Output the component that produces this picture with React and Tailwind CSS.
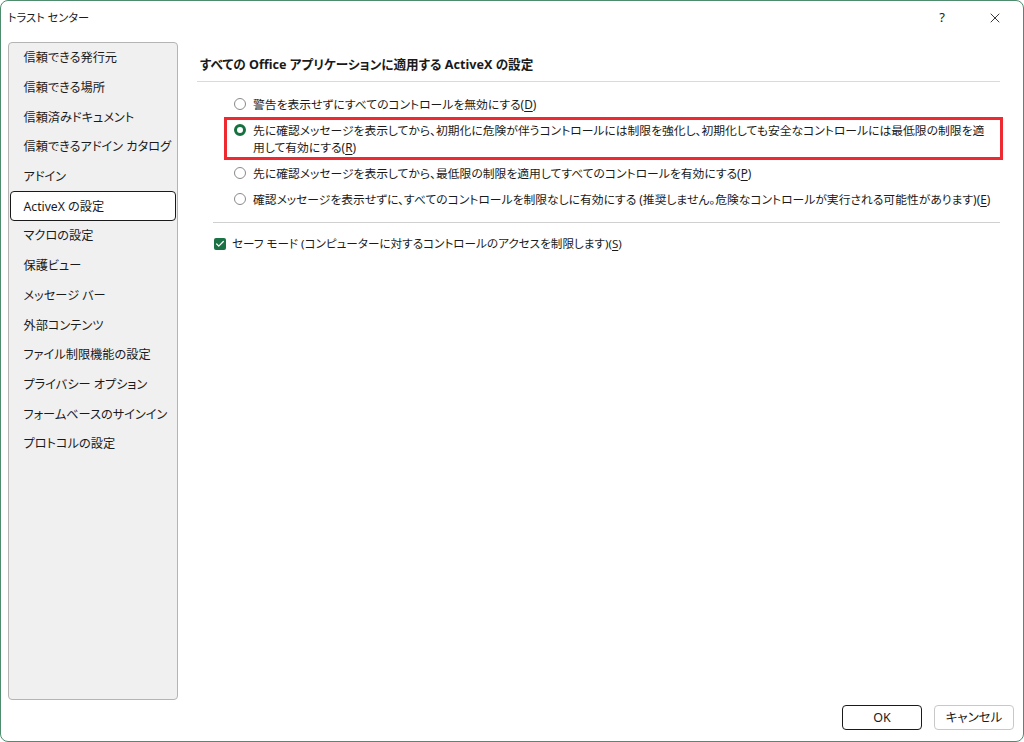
import { Check, X } from "lucide-react";

const navItems = [
  "信頼できる発行元",
  "信頼できる場所",
  "信頼済みドキュメント",
  "信頼できるアドイン カタログ",
  "アドイン",
  "ActiveX の設定",
  "マクロの設定",
  "保護ビュー",
  "メッセージ バー",
  "外部コンテンツ",
  "ファイル制限機能の設定",
  "プライバシー オプション",
  "フォームベースのサインイン",
  "プロトコルの設定",
];

const options = [
  { text: "警告を表示せずにすべてのコントロールを無効にする", key: "D" },
  {
    text: "先に確認メッセージを表示してから、初期化に危険が伴うコントロールには制限を強化し、初期化しても安全なコントロールには最低限の制限を適用して有効にする",
    key: "R",
    selected: true,
  },
  { text: "先に確認メッセージを表示してから、最低限の制限を適用してすべてのコントロールを有効にする", key: "P" },
  {
    text: "確認メッセージを表示せずに、すべてのコントロールを制限なしに有効にする (推奨しません。危険なコントロールが実行される可能性があります)",
    key: "E",
  },
];

function Radio({ selected }) {
  if (selected) {
    return (
      <span className="mt-[2.5px] box-border h-[12px] w-[12px] shrink-0 rounded-full border-[3.5px] border-[#17703f] bg-white" />
    );
  }
  return (
    <span className="mt-[2.5px] box-border h-[12px] w-[12px] shrink-0 rounded-full border border-[#8a8a8a] bg-white" />
  );
}

export default function App() {
  return (
    <div
      className="flex h-[742px] w-[1024px] flex-col overflow-hidden rounded-[8px] border border-[#4f8c6e] bg-white text-[12.2px] leading-[17px] text-[#1a1a1a] [font-feature-settings:'palt']"
      style={{ fontFamily: '"Noto Sans", "Noto Sans CJK JP", sans-serif' }}
    >
      {/* title bar */}
      <div className="flex h-[41px] shrink-0 items-start justify-between pt-[8px]">
        <div className="pl-[7px] text-[11.2px]">トラスト センター</div>
        <div className="flex items-center">
          <span className="mr-[42px] text-[13px]">?</span>
          <X className="mr-[20px] mt-[1px] h-[16px] w-[16px]" strokeWidth={1.3} />
        </div>
      </div>

      {/* body */}
      <div className="flex min-h-0 flex-1 px-[7px]">
        <div className="flex h-[658px] w-[170px] shrink-0 flex-col rounded-[4px] border border-[#b4b4b4] bg-[#f0f0f0]">
          {navItems.map((item) => (
            <div
              key={item}
              className={
                item === "ActiveX の設定"
                  ? "mx-[1px] flex h-[29.7px] shrink-0 items-center whitespace-nowrap rounded-[4px] border-[1.5px] border-[#1a1a1a] bg-white pl-[12.5px]"
                  : "flex h-[29.7px] shrink-0 items-center whitespace-nowrap pl-[14.5px]"
              }
            >
              {item}
            </div>
          ))}
        </div>

        <div className="ml-[19px] flex-1 pr-[16px] pt-[14px]">
          <div className="border-b border-[#dadada] pb-[8px] pl-[3px] text-[12.6px] font-bold">
            すべての Office アプリケーションに適用する ActiveX の設定
          </div>

          <div className="-mr-[6px] pl-[27px] pt-[9px] text-[11.8px]">
            {options.map((o) => (
              <div
                key={o.key}
                className={
                  o.selected
                    ? "mr-[3px] flex gap-[7px] py-[4.5px] pl-[10px] pr-[12px] ring-[3px] ring-inset ring-[#ee2a30]"
                    : "flex gap-[7px] py-[4.5px] pl-[10px] pr-[2px]"
                }
              >
                <Radio selected={o.selected} />
                <span>
                  {o.text}(<span className="underline underline-offset-2">{o.key}</span>)
                </span>
              </div>
            ))}
          </div>

          <div className="ml-[16px] mt-[10px] border-t border-[#d0d0d0] pt-[12px] text-[11.6px]">
            <div className="flex items-center gap-[6px] pl-[1px]">
              <span className="flex h-[12px] w-[12px] items-center justify-center rounded-[2px] bg-[#1b7244]">
                <Check className="h-[10px] w-[10px] text-white" strokeWidth={3} />
              </span>
              <span>
                セーフ モード (コンピューターに対するコントロールのアクセスを制限します)(
                <span className="underline underline-offset-2">S</span>)
              </span>
            </div>
          </div>
        </div>
      </div>

      {/* footer */}
      <div className="flex shrink-0 justify-end gap-[12px] pb-[11px] pr-[9px] pt-[5px]">
        <button className="h-[25px] w-[80px] rounded-[4px] border-[1.5px] border-[#1a1a1a] bg-white text-[12.5px]">
          OK
        </button>
        <button className="h-[25px] w-[80px] rounded-[4px] border border-[#c8c8c8] bg-white text-[12.5px]">
          キャンセル
        </button>
      </div>
    </div>
  );
}
